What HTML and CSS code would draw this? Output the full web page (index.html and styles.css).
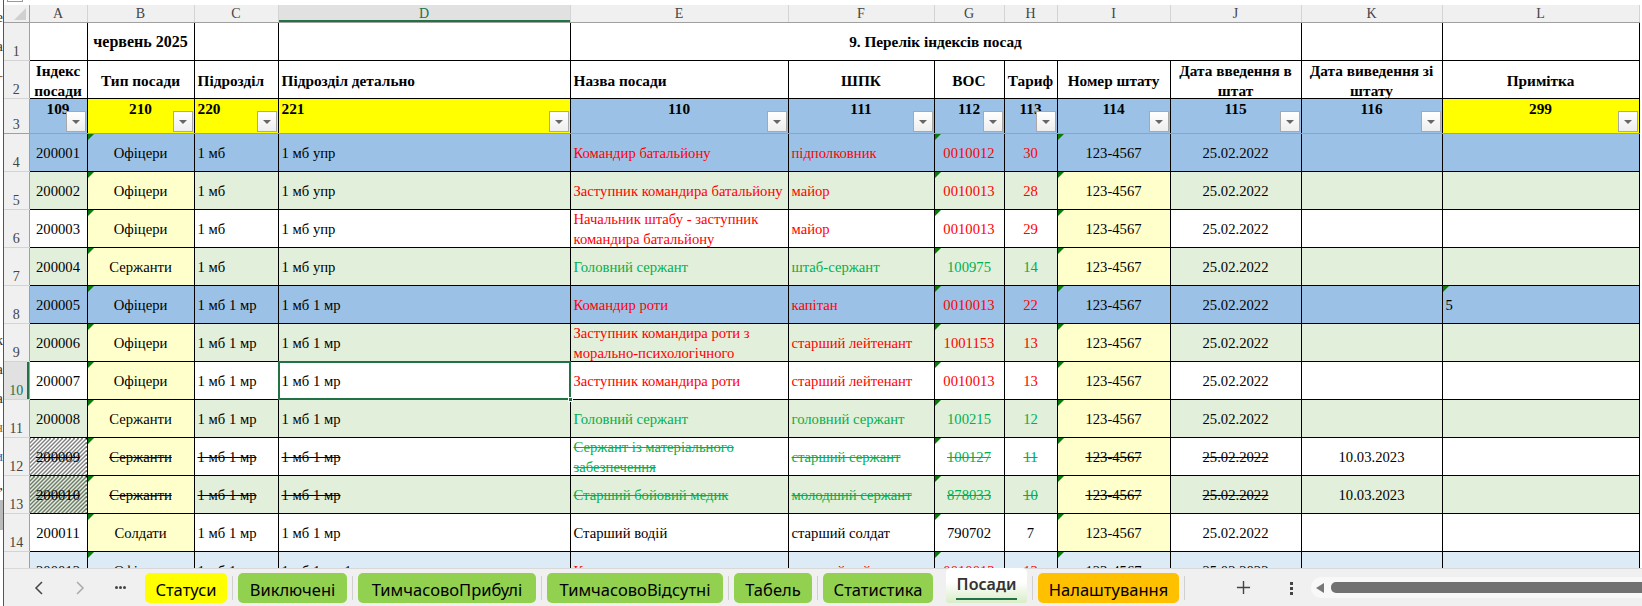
FILE: index.html
```html
<!DOCTYPE html>
<html lang="uk">
<head>
    <meta charset="UTF-8">
    <title>Посади</title>
    <link rel="stylesheet" href="styles.css">
</head>
<body>
    <div class="behind">
        <span>е</span><span>а</span><span class="dash">-</span><span class="gap">к</span><span>а</span><span>а</span><span class="dash">н</span><span class="blue-bit">и</span><span>,</span><span class="grey-bit"></span>
    </div>
    <div class="window">
        <div class="top-strip"><div class="formula-stub"></div></div>
        <div class="sheet">
            <table class="grid">
                <thead>
                    <tr>
                        <th class="corner w-row"><span class="corner-mark"></span></th>
                        <th class="w-a">A</th>
                        <th class="w-b">B</th>
                        <th class="w-c">C</th>
                        <th class="w-d col-selected">D</th>
                        <th class="w-e">E</th>
                        <th class="w-f">F</th>
                        <th class="w-g">G</th>
                        <th class="w-h">H</th>
                        <th class="w-i">I</th>
                        <th class="w-j">J</th>
                        <th class="w-k">K</th>
                        <th class="w-l">L</th>
                    </tr>
                </thead>
                <tbody>
                    <tr class="head title-row">
                        <td class="num">1</td>
                        <td></td>
                        <td class="c month">червень 2025</td>
                        <td></td>
                        <td></td>
                        <td class="c" colspan="6">9. Перелік індексів посад</td>
                        <td></td>
                        <td></td>
                    </tr>
                    <tr class="head">
                        <td class="num">2</td>
                        <td class="c"><div class="clip">Індекс посади</div></td>
                        <td class="c">Тип посади</td>
                        <td>Підрозділ</td>
                        <td>Підрозділ детально</td>
                        <td>Назва посади</td>
                        <td class="c">ШПК</td>
                        <td class="c">ВОС</td>
                        <td class="c">Тариф</td>
                        <td class="c">Номер штату</td>
                        <td class="c"><div class="clip">Дата введення в штат</div></td>
                        <td class="c"><div class="clip">Дата виведення зі штату</div></td>
                        <td class="c">Примітка</td>
                    </tr>
                    <tr class="codes">
                        <td class="num">3</td>
                        <td class="c bg-blue">109<span class="filter"></span></td>
                        <td class="c bg-yellow">210<span class="filter"></span></td>
                        <td class="bg-yellow">220<span class="filter"></span></td>
                        <td class="bg-yellow">221<span class="filter"></span></td>
                        <td class="c bg-blue">110<span class="filter"></span></td>
                        <td class="c bg-blue">111<span class="filter"></span></td>
                        <td class="c bg-blue">112<span class="filter"></span></td>
                        <td class="c bg-blue">113<span class="filter"></span></td>
                        <td class="c bg-blue">114<span class="filter"></span></td>
                        <td class="c bg-blue">115<span class="filter"></span></td>
                        <td class="c bg-blue">116<span class="filter"></span></td>
                        <td class="c bg-yellow">299<span class="filter"></span></td>
                    </tr>
                    <tr class="row-blue">
                        <td class="num">4</td>
                        <td class="c">200001</td>
                        <td class="c note">Офіцери</td>
                        <td>1 мб</td>
                        <td>1 мб упр</td>
                        <td class="red">Командир батальйону</td>
                        <td class="red">підполковник</td>
                        <td class="c red note">0010012</td>
                        <td class="c red">30</td>
                        <td class="c note">123-4567</td>
                        <td class="c">25.02.2022</td>
                        <td></td>
                        <td></td>
                    </tr>
                    <tr class="row-green">
                        <td class="num">5</td>
                        <td class="c">200002</td>
                        <td class="c note bg-pale">Офіцери</td>
                        <td>1 мб</td>
                        <td>1 мб упр</td>
                        <td class="red">Заступник командира батальйону</td>
                        <td class="red">майор</td>
                        <td class="c red note">0010013</td>
                        <td class="c red">28</td>
                        <td class="c note bg-pale">123-4567</td>
                        <td class="c">25.02.2022</td>
                        <td></td>
                        <td></td>
                    </tr>
                    <tr>
                        <td class="num">6</td>
                        <td class="c">200003</td>
                        <td class="c note bg-pale">Офіцери</td>
                        <td>1 мб</td>
                        <td>1 мб упр</td>
                        <td class="red"><div class="clip">Начальник штабу - заступник командира батальйону</div></td>
                        <td class="red">майор</td>
                        <td class="c red note">0010013</td>
                        <td class="c red">29</td>
                        <td class="c note bg-pale">123-4567</td>
                        <td class="c">25.02.2022</td>
                        <td></td>
                        <td></td>
                    </tr>
                    <tr class="row-green">
                        <td class="num">7</td>
                        <td class="c">200004</td>
                        <td class="c note bg-pale">Сержанти</td>
                        <td>1 мб</td>
                        <td>1 мб упр</td>
                        <td class="grn">Головний сержант</td>
                        <td class="grn">штаб-сержант</td>
                        <td class="c grn note">100975</td>
                        <td class="c grn">14</td>
                        <td class="c note bg-pale">123-4567</td>
                        <td class="c">25.02.2022</td>
                        <td></td>
                        <td></td>
                    </tr>
                    <tr class="row-blue">
                        <td class="num">8</td>
                        <td class="c">200005</td>
                        <td class="c note">Офіцери</td>
                        <td>1 мб 1 мр</td>
                        <td>1 мб 1 мр</td>
                        <td class="red">Командир роти</td>
                        <td class="red">капітан</td>
                        <td class="c red note">0010013</td>
                        <td class="c red">22</td>
                        <td class="c note">123-4567</td>
                        <td class="c">25.02.2022</td>
                        <td></td>
                        <td class="note">5</td>
                    </tr>
                    <tr class="row-green">
                        <td class="num">9</td>
                        <td class="c">200006</td>
                        <td class="c note bg-pale">Офіцери</td>
                        <td>1 мб 1 мр</td>
                        <td>1 мб 1 мр</td>
                        <td class="red"><div class="clip">Заступник командира роти з морально-психологічного</div></td>
                        <td class="red">старший лейтенант</td>
                        <td class="c red note">1001153</td>
                        <td class="c red">13</td>
                        <td class="c note bg-pale">123-4567</td>
                        <td class="c">25.02.2022</td>
                        <td></td>
                        <td></td>
                    </tr>
                    <tr>
                        <td class="num num-selected">10</td>
                        <td class="c">200007</td>
                        <td class="c note bg-pale">Офіцери</td>
                        <td>1 мб 1 мр</td>
                        <td class="selected">1 мб 1 мр</td>
                        <td class="red">Заступник командира роти</td>
                        <td class="red">старший лейтенант</td>
                        <td class="c red note">0010013</td>
                        <td class="c red">13</td>
                        <td class="c note bg-pale">123-4567</td>
                        <td class="c">25.02.2022</td>
                        <td></td>
                        <td></td>
                    </tr>
                    <tr class="row-green">
                        <td class="num">11</td>
                        <td class="c">200008</td>
                        <td class="c note bg-pale">Сержанти</td>
                        <td>1 мб 1 мр</td>
                        <td>1 мб 1 мр</td>
                        <td class="grn">Головний сержант</td>
                        <td class="grn">головний сержант</td>
                        <td class="c grn note">100215</td>
                        <td class="c grn">12</td>
                        <td class="c note bg-pale">123-4567</td>
                        <td class="c">25.02.2022</td>
                        <td></td>
                        <td></td>
                    </tr>
                    <tr class="gone">
                        <td class="num">12</td>
                        <td class="c hatch">200009</td>
                        <td class="c note bg-pale">Сержанти</td>
                        <td>1 мб 1 мр</td>
                        <td>1 мб 1 мр</td>
                        <td class="grn"><div class="clip">Сержант із матеріального забезпечення</div></td>
                        <td class="grn">старший сержант</td>
                        <td class="c grn note">100127</td>
                        <td class="c grn">11</td>
                        <td class="c note bg-pale">123-4567</td>
                        <td class="c">25.02.2022</td>
                        <td class="c keep">10.03.2023</td>
                        <td></td>
                    </tr>
                    <tr class="row-green gone">
                        <td class="num">13</td>
                        <td class="c hatch hatch-green">200010</td>
                        <td class="c note bg-pale">Сержанти</td>
                        <td>1 мб 1 мр</td>
                        <td>1 мб 1 мр</td>
                        <td class="grn">Старший бойовий медик</td>
                        <td class="grn">молодший сержант</td>
                        <td class="c grn note">878033</td>
                        <td class="c grn">10</td>
                        <td class="c note bg-pale">123-4567</td>
                        <td class="c">25.02.2022</td>
                        <td class="c keep">10.03.2023</td>
                        <td></td>
                    </tr>
                    <tr>
                        <td class="num">14</td>
                        <td class="c">200011</td>
                        <td class="c note bg-pale">Солдати</td>
                        <td>1 мб 1 мр</td>
                        <td>1 мб 1 мр</td>
                        <td>Старший водій</td>
                        <td>старший солдат</td>
                        <td class="c note">790702</td>
                        <td class="c">7</td>
                        <td class="c note bg-pale">123-4567</td>
                        <td class="c">25.02.2022</td>
                        <td></td>
                        <td></td>
                    </tr>
                    <tr class="row-light">
                        <td class="num">15</td>
                        <td class="c">200012</td>
                        <td class="c note">Офіцери</td>
                        <td>1 мб 1 мр</td>
                        <td>1 мб 1 мр 1 вз</td>
                        <td class="red">Командир взводу</td>
                        <td class="red">старший лейтенант</td>
                        <td class="c red note">0010013</td>
                        <td class="c red">13</td>
                        <td class="c note">123-4567</td>
                        <td class="c">25.02.2022</td>
                        <td></td>
                        <td></td>
                    </tr>
                </tbody>
            </table>
        </div>
        <div class="tab-bar">
            <div class="nav-buttons">
                <svg class="nav-icon" viewBox="0 0 12 16"><path d="M9 2 3 8l6 6" fill="none" stroke="#444" stroke-width="1.5"/></svg>
                <svg class="nav-icon" viewBox="0 0 12 16"><path d="M3 2l6 6-6 6" fill="none" stroke="#aaa" stroke-width="1.5"/></svg>
                <div class="more-dots"><span></span><span></span><span></span></div>
            </div>
            <div class="tab tab-yellow t-status">Статуси</div>
            <div class="tab-sep"></div>
            <div class="tab tab-green t-off">Виключені</div>
            <div class="tab-sep"></div>
            <div class="tab tab-green t-arrived">ТимчасовоПрибулі</div>
            <div class="tab-sep"></div>
            <div class="tab tab-green t-absent">ТимчасовоВідсутні</div>
            <div class="tab-sep"></div>
            <div class="tab tab-green t-table">Табель</div>
            <div class="tab-sep"></div>
            <div class="tab tab-green t-stats">Статистика</div>
            <div class="tab tab-active">Посади</div>
            <div class="tab-sep"></div>
            <div class="tab tab-orange t-settings">Налаштування</div>
            <div class="tab-sep"></div>
            <svg class="add-sheet" viewBox="0 0 16 16"><path d="M8 1v14M1 8h14" fill="none" stroke="#444" stroke-width="1.5"/></svg>
            <div class="kebab"><span></span><span></span><span></span></div>
            <div class="scrollbar">
                <div class="scroll-arrow"></div>
                <div class="scroll-thumb"></div>
            </div>
        </div>
    </div>
</body>
</html>
```

FILE: styles.css
```css
html, body {
    margin: 0;
    padding: 0;
}
body {
    width: 1642px;
    height: 606px;
    overflow: hidden;
    display: flex;
    background-color: white;
    font-family: "Liberation Serif", serif;
}
.behind {
    width: 3px;
    height: 606px;
    overflow: hidden;
    font-size: 15px;
    color: #333;
    direction: rtl;
    flex-shrink: 0;
    padding-top: 3px;
    box-sizing: border-box;
}
.behind span {
    display: block;
    height: 29px;
    line-height: 29px;
}
.behind .gap {
    margin-top: 236px;
}
.behind .dash {
    color: #a8641e;
}
.behind .blue-bit {
    color: #1f6fb5;
}
.behind .grey-bit {
    height: 30px;
    background-color: #bbb;
}
.window {
    flex: 1;
    min-width: 0;
    height: 606px;
    display: flex;
    flex-direction: column;
    border-left: 1px solid #217346;
}
.top-strip {
    height: 5px;
    padding-left: 3px;
}
.formula-stub {
    width: 16px;
    height: 2px;
    border: 1px solid #999;
    border-top: none;
    box-sizing: border-box;
}
.sheet {
    height: 563px;
    overflow: hidden;
}

/* grid */
.grid {
    border-collapse: collapse;
    table-layout: fixed;
    width: 1635px;
    font-size: 14.67px;
    color: #000;
}
.w-row { width: 25px; }
.w-a { width: 58px; }
.w-b { width: 107px; }
.w-c { width: 84px; }
.w-d { width: 292px; }
.w-e { width: 218px; }
.w-f { width: 146px; }
.w-g { width: 70px; }
.w-h { width: 53px; }
.w-i { width: 113px; }
.w-j { width: 131px; }
.w-k { width: 141px; }
.w-l { width: 197px; }
.grid th {
    height: 17px;
    padding: 0;
    box-sizing: border-box;
    background-color: #f0f0f0;
    border-right: 1px solid #d4d4d4;
    border-bottom: 1px solid #a0a0a0;
    font-size: 14px;
    font-weight: normal;
    color: #444;
    text-align: center;
    line-height: 17px;
}
.grid .corner {
    position: relative;
    border-right: 1px solid #a0a0a0;
}
.corner-mark {
    position: absolute;
    right: 3px;
    bottom: 2px;
    width: 0;
    height: 0;
    border-left: 12px solid transparent;
    border-bottom: 12px solid #d0d0d0;
}
.grid .col-selected {
    background-color: #e1e1e1;
    color: #217346;
    box-shadow: inset 0 -2px 0 #217346;
}
.grid td {
    height: 38px;
    padding: 2px 3px 0;
    border: 1px solid #000;
    overflow: hidden;
    white-space: nowrap;
    position: relative;
    box-sizing: border-box;
}
.grid .num {
    padding: 0;
    background-color: #f0f0f0;
    border: none;
    border-right: 1px solid #a0a0a0;
    border-bottom: 1px solid #d4d4d4;
    font-size: 14px;
    color: #444;
    text-align: center;
    vertical-align: bottom;
    line-height: 17px;
}
.grid .num-selected {
    background-color: #e1e1e1;
    color: #217346;
    box-shadow: inset -2px 0 0 #217346;
}
.c {
    text-align: center;
}
.clip {
    height: 35px;
    margin-top: -4px;
    white-space: normal;
    line-height: 19.5px;
}
.head td {
    font-size: 15.3px;
    font-weight: bold;
}
.grid .title-row td {
    padding-top: 0;
}
.head .month {
    font-size: 16px;
}
.head .num {
    font-size: 14px;
    font-weight: normal;
}
.grid .codes td {
    height: 35px;
    padding-top: 0;
    vertical-align: top;
    font-size: 15.3px;
    font-weight: bold;
    line-height: 20px;
    border-bottom: 1px solid #a0a0a0;
}
.grid .codes .num {
    font-size: 14px;
    font-weight: normal;
    line-height: 17px;
    vertical-align: bottom;
}
.filter {
    position: absolute;
    right: 1px;
    bottom: 1px;
    width: 20px;
    height: 21px;
    box-sizing: border-box;
    background: linear-gradient(#fff, #eee);
    border: 1px solid #a8a8a8;
}
.filter::after {
    content: "";
    position: absolute;
    left: 5px;
    top: 8px;
    border-left: 4px solid transparent;
    border-right: 4px solid transparent;
    border-top: 4px solid #666;
}

/* fills */
.bg-blue, .row-blue td { background-color: #9bc2e6; }
.bg-yellow { background-color: #ffff00; }
.row-green td { background-color: #e2efda; }
.row-light td { background-color: #ddebf7; }
.grid td.bg-pale { background-color: #ffffcc; }
.grid .num, .row-green .num, .row-blue .num, .row-light .num { background-color: #f0f0f0; }
.grid .num-selected { background-color: #e1e1e1; }
.red { color: #ff0000; }
.grn { color: #00b050; }
.note::before {
    content: "";
    position: absolute;
    left: 0;
    top: 0;
    border-top: 6px solid #0b7a0b;
    border-right: 6px solid transparent;
}
.gone td {
    text-decoration: line-through;
}
.gone .num, .gone .keep {
    text-decoration: none;
}
.grid .hatch {
    background-color: white;
    background-image: repeating-linear-gradient(135deg, #000 0 0.9px, transparent 0.9px 2.83px);
}
.grid .hatch-green {
    background-color: #e2efda;
}
.grid td.selected {
    overflow: visible;
}
.selected::after {
    content: "";
    position: absolute;
    left: -1px;
    right: -1px;
    top: -1px;
    bottom: -1px;
    border: 2px solid #217346;
}
.selected::before {
    content: "";
    position: absolute;
    right: -3px;
    bottom: -3px;
    width: 5px;
    height: 5px;
    background-color: #217346;
    border: 1px solid white;
    box-sizing: border-box;
    z-index: 1;
}

/* sheet tabs */
.tab-bar {
    height: 38px;
    box-sizing: border-box;
    position: relative;
    background-color: #f0f0f0;
    border-top: 1px solid #d8d8d8;
    display: flex;
    align-items: flex-end;
    padding-bottom: 3px;
    font-family: "Noto Sans", sans-serif;
    font-size: 16.5px;
    z-index: 2;
}
.nav-buttons {
    width: 141px;
    height: 30px;
    display: flex;
    align-items: center;
    padding-left: 29px;
    box-sizing: border-box;
}
.nav-icon {
    width: 12px;
    height: 16px;
    margin-right: 29px;
    margin-top: -1px;
}
.more-dots {
    display: flex;
    gap: 1px;
    margin-top: -2px;
}
.more-dots span {
    width: 3px;
    height: 3px;
    border-radius: 50%;
    background-color: #444;
}
.tab {
    height: 30px;
    box-sizing: border-box;
    display: flex;
    justify-content: center;
    align-items: center;
    padding-top: 2px;
    border-radius: 5px;
    color: #000;
    white-space: nowrap;
}
.tab-yellow { background-color: #ffff00; }
.tab-green { background-color: #92d050; }
.tab-orange { background-color: #ffc000; }
.t-status { width: 82px; }
.t-off { width: 109px; }
.t-arrived { width: 178px; }
.t-absent { width: 176px; }
.t-table { width: 78px; }
.t-stats { width: 110px; }
.t-settings { width: 141px; }
.tab-sep {
    width: 1px;
    height: 24px;
    margin: 0 5px 3px;
    background-color: #d0d0d0;
}
.tab-active {
    width: 81px;
    height: 35px;
    margin-left: 13px;
    position: relative;
    background: linear-gradient(#fff 40%, #d9edc8);
    font-size: 16px;
    font-weight: 600;
    color: #333;
    padding: 0 0 4px;
    border-radius: 5px 5px 3px 3px;
}
.tab-active::after {
    content: "";
    position: absolute;
    left: 10px;
    right: 10px;
    bottom: 3px;
    height: 2px;
    background-color: #217346;
}
.add-sheet {
    width: 15px;
    height: 15px;
    margin-left: 46px;
    margin-bottom: 8px;
}
.kebab {
    display: flex;
    flex-direction: column;
    gap: 2px;
    margin-left: 39px;
    margin-bottom: 8px;
}
.kebab span {
    width: 3px;
    height: 3px;
    background-color: #444;
}
.scrollbar {
    flex: 1;
    height: 21px;
    margin-left: 18px;
    margin-bottom: 5px;
    background-color: #f8f8f8;
    border-radius: 10px 0 0 10px;
    display: flex;
    align-items: center;
    padding-left: 5px;
}
.scroll-arrow {
    border-top: 5px solid transparent;
    border-bottom: 5px solid transparent;
    border-right: 8px solid #777;
    margin-right: 7px;
}
.scroll-thumb {
    flex: 1;
    height: 11px;
    background-color: #717171;
    border-radius: 5px 0 0 5px;
}
```
